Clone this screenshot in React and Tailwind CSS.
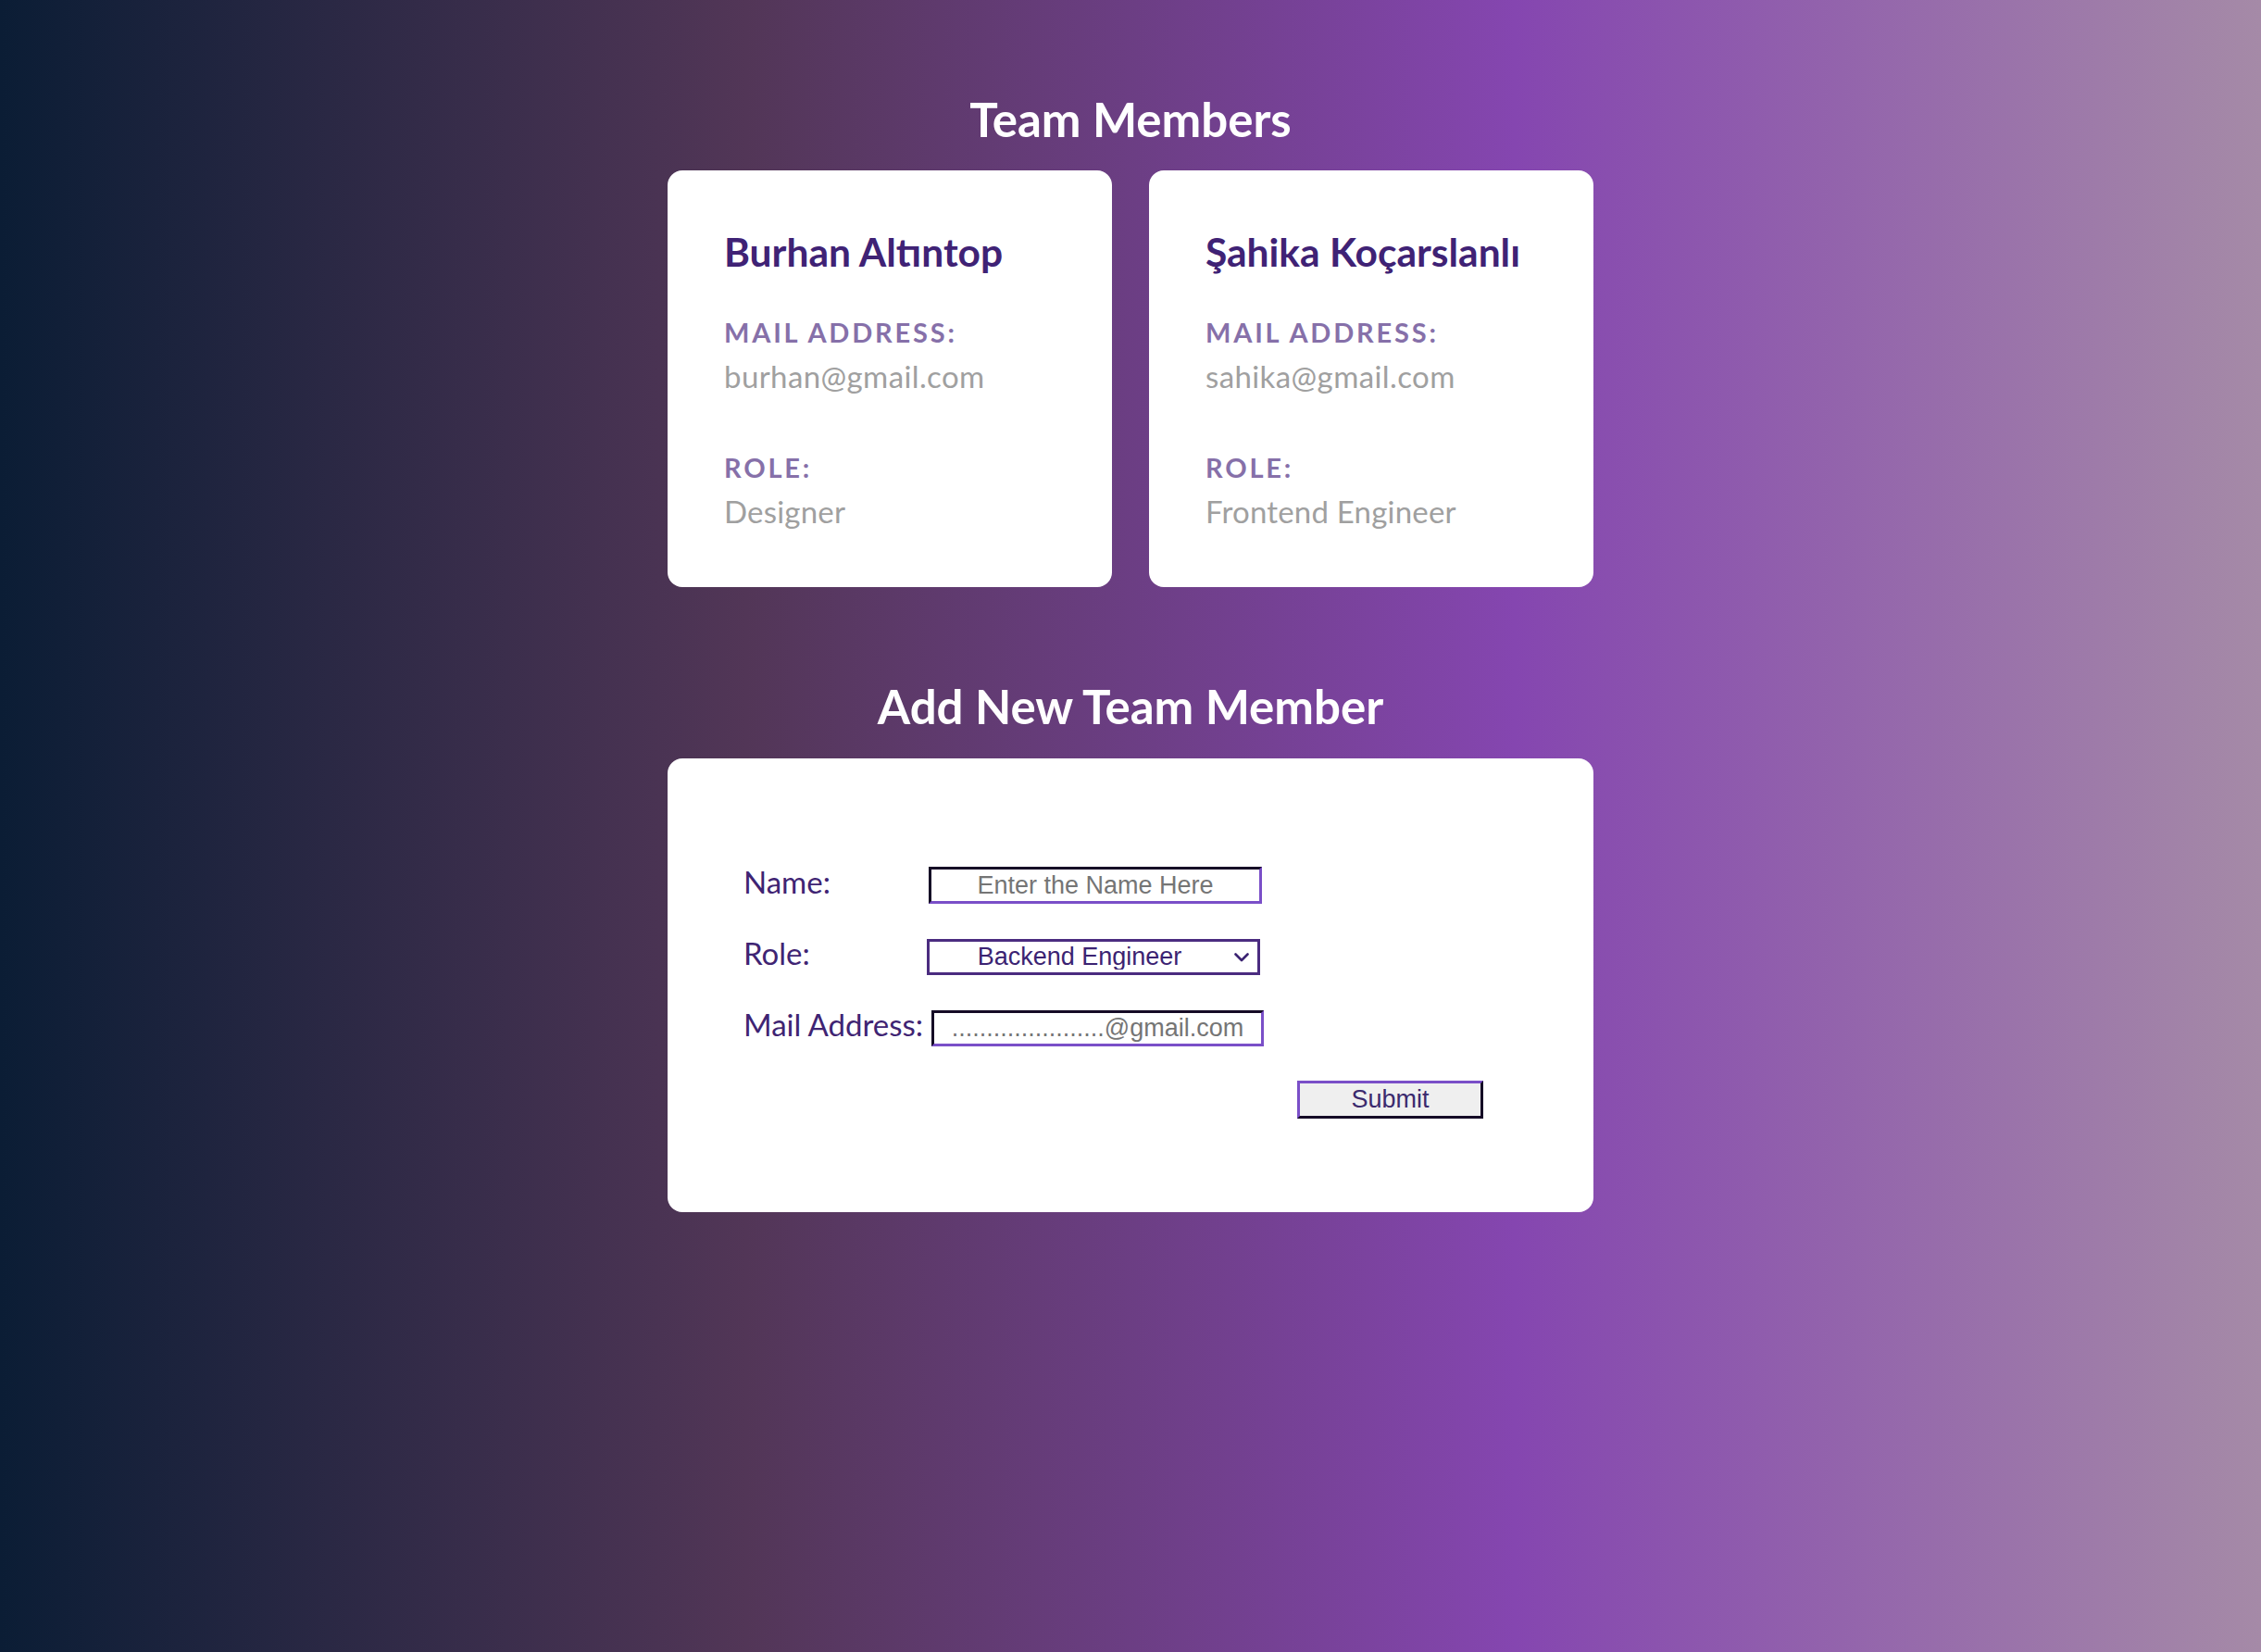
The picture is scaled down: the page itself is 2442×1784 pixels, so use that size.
import React from "react";

const sans = "font-['Lato','Noto_Sans',sans-serif]";

function MemberCard({ name, email, role }) {
  return (
    <div className={`w-[480px] h-[450px] bg-white rounded-[16px] pl-[61px] pt-[67px] ${sans}`}>
      <div className="text-[42.5px] leading-none font-bold text-[#3f2275] whitespace-nowrap">{name}</div>
      <div className="mt-[50px] text-[29px] leading-none font-bold tracking-[2.8px] text-[#8670a9]">MAIL ADDRESS:</div>
      <div className="mt-[17px] text-[33px] leading-none tracking-[0.4px] text-[#a0a0a0]">{email}</div>
      <div className="mt-[67px] text-[29px] leading-none font-bold tracking-[2.8px] text-[#8670a9]">ROLE:</div>
      <div className="mt-[17px] text-[33px] leading-none tracking-[0.2px] text-[#a0a0a0]">{role}</div>
    </div>
  );
}

const insetBorder =
  "border-[3px] border-t-[#150b26] border-l-[#150b26] border-b-[#7a4fc8] border-r-[#7a4fc8]";

export default function App() {
  return (
    <div className="min-h-screen w-full bg-[linear-gradient(to_right,#0b1d35_0%,#523657_33%,#8546b0_67%,#a58aa7_100%)] flex flex-col items-center">
      <h1 className={`mt-[103px] text-[51px] leading-none font-bold text-white ${sans}`}>Team Members</h1>
      <div className="mt-[30px] flex gap-[40px]">
        <MemberCard name="Burhan Altıntop" email="burhan@gmail.com" role="Designer" />
        <MemberCard name="Şahika Koçarslanlı" email="sahika@gmail.com" role="Frontend Engineer" />
      </div>
      <h2 className={`mt-[103px] text-[51px] leading-none font-bold text-white ${sans}`}>Add New Team Member</h2>
      <div className="mt-[31px] w-[1000px] h-[490px] bg-white rounded-[16px] pl-[82px] pt-[117px]">
        <div className="flex flex-col items-start gap-[37px]">
          <div className="flex items-center">
            <label className={`w-[200px] pb-[7px] text-[33px] leading-none text-[#3f2473] ${sans}`}>Name:</label>
            <input
              type="text"
              placeholder="Enter the Name Here"
              className={`w-[360px] h-[40px] ${insetBorder} bg-white text-center text-[27px] font-['Liberation_Sans',Arial,sans-serif] text-[#3b2372] placeholder:text-[#757575] outline-none`}
            />
          </div>
          <div className="flex items-center">
            <label className={`w-[198px] pb-[7px] text-[33px] leading-none text-[#3f2473] ${sans}`}>Role:</label>
            <div className="relative w-[360px] h-[39px]">
              <select
                defaultValue="Backend Engineer"
                className="appearance-none w-full h-full border-[3px] border-[#4b2c80] bg-white pr-[30px] text-center text-[27px] leading-none font-['Liberation_Sans',Arial,sans-serif] text-[#3b2372] outline-none"
              >
                <option>Frontend Engineer</option>
                <option>Backend Engineer</option>
                <option>Designer</option>
              </select>
              <svg
                className="pointer-events-none absolute right-[12px] top-[15px]"
                width="16"
                height="10"
                viewBox="0 0 16 10"
                fill="none"
              >
                <path d="M1.5 1.5 L8 8 L14.5 1.5" stroke="#3b2372" strokeWidth="2.6" strokeLinecap="round" strokeLinejoin="round" />
              </svg>
            </div>
          </div>
          <div className="flex items-center">
            <label className={`w-[203px] pb-[7px] text-[33px] leading-none text-[#3f2473] whitespace-nowrap ${sans}`}>Mail Address:</label>
            <input
              type="email"
              placeholder="......................@gmail.com"
              className={`w-[359px] h-[39px] ${insetBorder} bg-white text-center text-[27px] font-['Liberation_Sans',Arial,sans-serif] text-[#3b2372] placeholder:text-[#757575] outline-none`}
            />
          </div>
          <button
            type="button"
            className="ml-[598px] w-[201px] h-[41px] border-[3px] border-t-[#7a4fc8] border-l-[#7a4fc8] border-b-[#150b26] border-r-[#150b26] bg-[#efefef] text-[27px] leading-none font-['Liberation_Sans',Arial,sans-serif] text-[#3b2a6e]"
          >
            Submit
          </button>
        </div>
      </div>
    </div>
  );
}
